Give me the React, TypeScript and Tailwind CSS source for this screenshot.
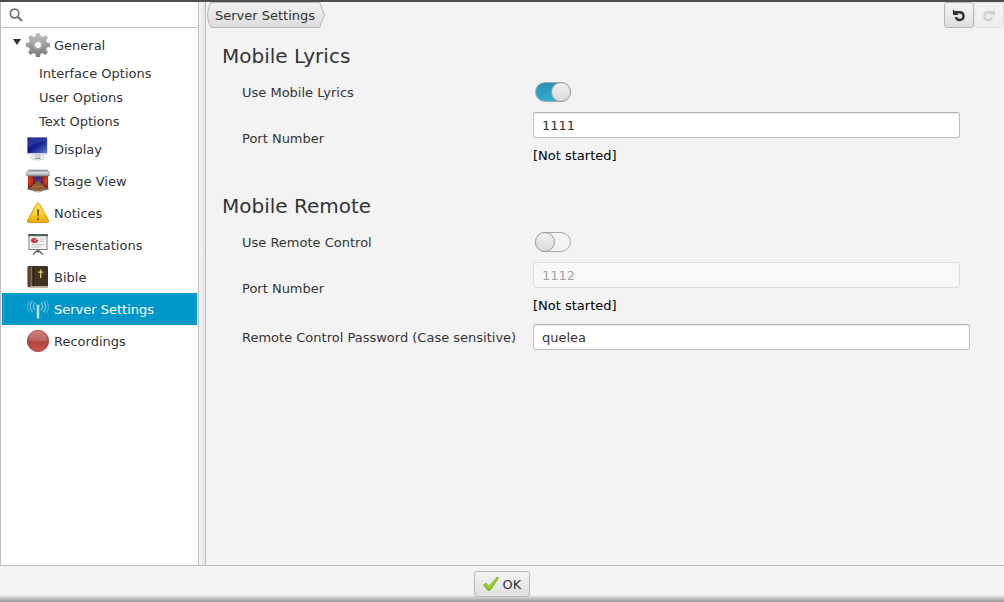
import { useState } from "react";
import type { ReactNode } from "react";
import clsx from "clsx";

const GearIcon = () => (
  <svg viewBox="0 0 24 24" className="size-6">
    <defs>
      <linearGradient id="gear" x1="0" y1="0" x2="0" y2="1">
        <stop offset="0" stopColor="#c2c2c2" />
        <stop offset="1" stopColor="#777777" />
      </linearGradient>
    </defs>
    <g fill="url(#gear)">
      <path
        fillRule="evenodd"
        d="M10 0h4l.6 3.200 2.200.9L19.500 2.200 22 4.800l-2 2.600.9 2.200 3.100.5v3.800l-3.100.6-.9 2.200 1.900 2.600-2.700 2.700-2.600-1.900-2.100.9L14 24h-4l-.5-3.100-2.200-.9-2.600 1.900L2 19.200l1.900-2.600-.9-2.100L0 14v-4l3-.5.9-2.200L2 4.700 4.700 2l2.700 1.900 2.100-.8zM12 9a3 3 0 1 0 0 6 3 3 0 0 0 0-6z"
      />
    </g>
    <circle cx="12" cy="12" r="4.200" fill="none" stroke="#c9c9c9" strokeWidth="1.500" opacity=".4" />
  </svg>
);

const DisplayIcon = () => (
  <svg viewBox="0 0 24 24" className="size-6">
    <defs>
      <linearGradient id="screen" x1="0" y1="0" x2="1" y2="1">
        <stop offset="0" stopColor="#06107c" />
        <stop offset=".5" stopColor="#101c92" />
        <stop offset="1" stopColor="#5f83cf" />
      </linearGradient>
    </defs>
    <ellipse cx="11.500" cy="20.500" rx="7" ry="2.500" fill="#f2f2f2" stroke="#c4c4c4" strokeWidth=".8" />
    <path d="M10 17h3.500l.6 4h-4.700z" fill="#d8d8d8" stroke="#aaa" strokeWidth=".5" />
    <path d="M8.500 21.500h6" stroke="#888" strokeWidth=".8" />
    <rect x="1" y="0" width="20.500" height="17.500" rx=".8" fill="#cfd0d8" />
    <rect x="1.500" y="0.500" width="19.500" height="15.500" fill="url(#screen)" />
    <path d="M1.500 .5h19.500v3.500C14 4.500 7 7 1.500 11z" fill="#fff" opacity=".13" />
  </svg>
);

const StageIcon = () => (
  <svg viewBox="0 0 24 24" className="size-6">
    <defs>
      <linearGradient id="floor" x1="0" y1="0" x2="0" y2="1">
        <stop offset="0" stopColor="#34266f" />
        <stop offset=".55" stopColor="#4a2341" />
        <stop offset="1" stopColor="#b87a22" />
      </linearGradient>
      <linearGradient id="curtain" x1="0" y1="0" x2="0" y2="1">
        <stop offset="0" stopColor="#8f1c12" />
        <stop offset=".5" stopColor="#c9310e" />
        <stop offset="1" stopColor="#7a2415" />
      </linearGradient>
      <linearGradient id="canopy" x1="0" y1="0" x2="0" y2="1">
        <stop offset="0" stopColor="#8f9598" />
        <stop offset=".5" stopColor="#dfe2e3" />
        <stop offset="1" stopColor="#84898c" />
      </linearGradient>
    </defs>
    <path d="M2 5h20v15l-6 1c-1 2.500-7 2.500-8 0l-6-1z" fill="url(#floor)" />
    <path d="M12 11l-8 8h16z" fill="#c98d33" opacity=".5" />
    <path d="M2 6h6c0 6-1 9-3 13H2z" fill="url(#curtain)" />
    <path d="M22 6h-6c0 6 1 9 3 13h3z" fill="url(#curtain)" />
    <path d="M4 8v8M20 8v8" stroke="#e2501f" />
    <path d="M9.500 7v6M12 7v6M14.500 7v6" stroke="#4c46ad" strokeWidth="1" opacity=".7" />
    <path d="M1.500 18.500l6.500 1.300c1.200 1.700 6.800 1.700 8 0l6.500-1.300v2.200l-6 1c-1.500 2.200-7.500 2.200-9 0l-6-1z" fill="#796b62" />
    <path d="M9 22c2 .8 4 .8 6 0" stroke="#e4c878" fill="none" />
    <path d="M2.500 1h19L23.500 4v3H.5V4z" fill="url(#canopy)" stroke="#858a8d" strokeWidth=".6" />
  </svg>
);

const WarningIcon = () => (
  <svg viewBox="0 0 24 24" className="size-6">
    <defs>
      <linearGradient id="warn" x1="0" y1="0" x2="0" y2="1">
        <stop offset="0" stopColor="#ffe45a" />
        <stop offset=".55" stopColor="#fcd224" />
        <stop offset="1" stopColor="#eda400" />
      </linearGradient>
    </defs>
    <path
      d="M12 2.300c.8 0 1.400.4 1.800 1.200l8.600 15.800c.7 1.300.2 2.300-1.200 2.300H2.800c-1.400 0-1.900-1-1.200-2.300l8.600-15.800c.4-.8 1-1.200 1.800-1.200z"
      fill="url(#warn)"
      stroke="#cf9000"
      strokeWidth=".9"
    />
    <path d="M11.100 8.500h1.900l-.4 7h-1.100z" fill="#594313" />
    <circle cx="12" cy="18" r="1.100" fill="#594313" />
  </svg>
);

const PresentationIcon = () => (
  <svg viewBox="0 0 24 24" className="size-6">
    <path d="M12 17l-5 4.500M12 17l5 4.500M12 17v3" stroke="#646964" strokeWidth="1.600" fill="none" />
    <rect x="3" y="2.500" width="18" height="14" fill="#f5f6f4" stroke="#777d77" />
    <rect x="2" y="1" width="20" height="2.200" rx=".8" fill="#536159" />
    <ellipse cx="8.500" cy="7.500" rx="3.600" ry="2.500" fill="#ce3038" />
    <path d="M8.500 7.500l3-1.500" stroke="#fff" strokeWidth=".7" />
    <path d="M14 6h4.500M14 8.300h4M5.500 11.700h13M5.500 14h9" stroke="#b4b8b4" strokeWidth=".9" />
  </svg>
);

const BibleIcon = () => (
  <svg viewBox="0 0 24 24" className="size-6">
    <path d="M3 20h19v2.500H3z" fill="#d6cdb8" />
    <path d="M3 1h17.500c.8 0 1.500.6 1.500 1.400V20c0 .7-.5 1-1.200 1H4.500L3 22.500c-1-.3-1.500-1-1.500-2V2.500C1.500 1.600 2.100 1 3 1z" fill="#403127" />
    <path d="M1.800 2.500h3.700V21H2z" fill="#5c432f" />
    <path d="M5.500 1.500V21" stroke="#99652f" strokeWidth="1.500" />
    <path d="M7.300 1.500V21" stroke="#241b16" />
    <path d="M14.700 4.500v8.500M12 7.200h5.400" stroke="#e8cb5c" strokeWidth="1.300" />
    <path d="M4 22h18" stroke="#7e7057" strokeWidth=".8" />
  </svg>
);

const AntennaIcon = () => (
  <svg viewBox="0 0 24 24" className="size-6" fill="none" stroke="#7fc3dd" strokeLinecap="round">
    <path d="M12 11v9.500" stroke="#c5dfe9" strokeWidth="2.400" />
    <circle cx="12" cy="9" r="1.800" fill="#9ad0e4" stroke="none" />
    <path d="M8.800 5.800c-1.600 2-1.600 5 0 7M15.200 5.800c1.600 2 1.600 5 0 7" strokeWidth="1.200" />
    <path d="M6.200 4.300c-2.600 3-2.600 7.400 0 10.400M17.800 4.300c2.600 3 2.600 7.400 0 10.400" strokeWidth="1.200" />
    <path d="M3.700 3.500c-3 3.800-3 8.500 0 12.300M20.300 3.500c3 3.800 3 8.500 0 12.300" strokeWidth="1" opacity=".7" />
  </svg>
);

const RecordIcon = () => (
  <svg viewBox="0 0 24 24" className="size-6">
    <defs>
      <linearGradient id="rec" x1="0" y1="0" x2="0" y2="1">
        <stop offset="0" stopColor="#c36a67" />
        <stop offset=".5" stopColor="#b0413d" />
        <stop offset="1" stopColor="#c9544c" />
      </linearGradient>
    </defs>
    <circle cx="12" cy="12" r="10.700" fill="url(#rec)" stroke="#9a4743" strokeWidth=".8" />
    <path d="M2.500 11a9.500 9.500 0 0 1 19 0c-5 2.200-14 2.200-19 0z" fill="#fff" opacity=".17" />
  </svg>
);

const SearchIcon = () => (
  <svg viewBox="0 0 14 14" className="size-3.5" fill="none" stroke="#707070">
    <circle cx="5.500" cy="5.500" r="4.300" strokeWidth="1.700" />
    <path d="M8.800 8.800L13 13" strokeWidth="2" />
  </svg>
);

const UndoIcon = () => (
  <svg viewBox="0 0 14 14" className="size-3.5" fill="none" stroke="currentColor">
    <path d="M3 4.200h4.800a3.900 3.900 0 1 1-3.900 5" strokeWidth="2.400" />
    <path d="M1 1.200v5.800h5.800z" fill="currentColor" stroke="none" />
  </svg>
);

const CheckIcon = () => (
  <svg viewBox="0 0 16 16" className="size-4">
    <path d="M.5 9l2.700-1.700 2.800 3L14 1.200l1.500.6L7 14.500H5.200z" fill="#8cc713" stroke="#6aa51a" strokeWidth=".8" strokeLinejoin="round" />
    <path d="M2.300 9.200l1.300-1 2.500 3.300 7.700-9" fill="none" stroke="#bce455" strokeWidth=".9" />
  </svg>
);

const subItems = ["Interface Options", "User Options", "Text Options"];

const items = [
  { label: "Display", icon: <DisplayIcon /> },
  { label: "Stage View", icon: <StageIcon /> },
  { label: "Notices", icon: <WarningIcon /> },
  { label: "Presentations", icon: <PresentationIcon /> },
  { label: "Bible", icon: <BibleIcon /> },
  { label: "Server Settings", icon: <AntennaIcon /> },
  { label: "Recordings", icon: <RecordIcon /> },
];

const Toggle = ({ id, checked, onChange }: { id: string; checked: boolean; onChange: (v: boolean) => void }) => (
  <input
    id={id}
    type="checkbox"
    role="switch"
    checked={checked}
    onChange={(e) => onChange(e.target.checked)}
    className={clsx(
      "ml-0.5 flex h-5 w-9 appearance-none items-center rounded-full border border-[#a8a8a8]",
      "before:-mx-px before:size-5 before:shrink-0 before:rounded-full before:border before:border-[#a0a0a0] before:bg-linear-to-b before:from-[#f0f0f0] before:to-[#dadada]",
      checked ? "justify-end bg-linear-to-b from-[#2592b4] to-[#35add2]" : "bg-[#f3f3f3]",
    )}
  />
);

const fieldClass =
  "block h-[26px] w-full rounded-[3px] border border-[#bfbfbf] border-t-[#b0b0b0] bg-white px-2 leading-[18px] text-[#333] shadow-[inset_0_1px_1px_#eeeeee] outline-none disabled:border-[#dcdcdc] disabled:bg-[#f8f8f8] disabled:text-[#a3a3a3] disabled:shadow-none";

const Row = ({ id, label, children }: { id: string; label: string; children: ReactNode }) => (
  <div className="flex min-h-6 items-center">
    <label htmlFor={id} className="w-[291px] shrink-0">
      {label}
    </label>
    <div className="min-w-0 flex-1">{children}</div>
  </div>
);

const Heading = ({ children }: { children: ReactNode }) => (
  <h2 className="mb-3 text-[20px] leading-6">{children}</h2>
);

const App = () => {
  const [selected, setSelected] = useState("Server Settings");
  const [open, setOpen] = useState(true);
  const [lyrics, setLyrics] = useState(true);
  const [remote, setRemote] = useState(false);
  const [lyricsPort, setLyricsPort] = useState("1111");
  const [remotePort, setRemotePort] = useState("1112");
  const [password, setPassword] = useState("quelea");

  return (
    <div className="flex h-screen flex-col border-t-2 border-[#504d52] bg-[#f3f3f3] font-['DejaVu_Sans',sans-serif] text-[13px] leading-[19px] text-[#333]">
      <div className="flex min-h-0 flex-1 border-b border-[#bcbcbc]">
        <aside className="flex w-[199px] shrink-0 flex-col border-x border-[#bebebe] bg-white">
          <label className="flex h-[26px] items-center rounded-[3px] border-b border-[#bebebe] pt-px pl-2">
            <SearchIcon />
            <input type="text" aria-label="Search" className="min-w-0 flex-1 px-2 outline-none" />
          </label>
          <ul className="px-px pt-px">
            <li>
              <button
                type="button"
                aria-expanded={open}
                onClick={() => setOpen(!open)}
                className="flex h-8 w-full items-center pl-[11px]"
              >
                <svg viewBox="0 0 8 6" className="mr-[5px] mb-1.5 h-1.5 w-2">
                  <path d="M0 0h8L4 6z" fill="#333" />
                </svg>
                <GearIcon />
                <span className="ml-1">General</span>
              </button>
              {open && (
                <ul>
                  {subItems.map((label) => (
                    <li key={label}>
                      <button type="button" className="flex h-6 w-full items-center pl-[37px]">
                        {label}
                      </button>
                    </li>
                  ))}
                </ul>
              )}
            </li>
            {items.map(({ label, icon }) => (
              <li key={label}>
                <button
                  type="button"
                  onClick={() => setSelected(label)}
                  className={clsx(
                    "flex h-8 w-full items-center gap-1",
                    selected === label
                      ? "border border-[#0093c5] bg-[#0096c9] pl-[23px] text-white shadow-[inset_0_0_0_1px_#1fa1ce]"
                      : "pl-6",
                  )}
                >
                  {icon}
                  {label}
                </button>
              </li>
            ))}
          </ul>
        </aside>
        <div className="w-[7px] shrink-0 border-r border-[#bebebe] bg-linear-to-r from-[#f6f6f6] to-[#e4e4e4]" />
        <main className="min-w-0 flex-1">
          <div className="flex h-[26px] items-stretch justify-between pl-px">
            <button type="button" className="relative px-2">
              <svg
                viewBox="0 0 118 26"
                preserveAspectRatio="none"
                className="absolute inset-0 size-full"
              >
                <defs>
                  <linearGradient id="crumb" x1="0" y1="0" x2="0" y2="1">
                    <stop offset="0" stopColor="#f2f2f2" />
                    <stop offset="1" stopColor="#dcdcdc" />
                  </linearGradient>
                </defs>
                <path
                  d="M4 .5H112.500L117.500 13L112.500 25.500H4C1.500 21 .5 17 .5 13S1.500 5 4 .5z"
                  fill="url(#crumb)"
                  stroke="#b9b9b9"
                />
              </svg>
              <span className="relative mr-0.5">Server Settings</span>
            </button>
            <div className="flex">
              <button
                type="button"
                aria-label="Undo"
                className="flex w-[30px] items-center justify-center rounded-[3px] border border-[#b8b8b8] bg-linear-to-b from-[#f4f4f4] to-[#dfdfdf]"
              >
                <UndoIcon />
              </button>
              <button
                type="button"
                aria-label="Redo"
                disabled
                className="flex w-[30px] items-center justify-center rounded-[3px] border border-[#e2e2e2] bg-linear-to-b from-[#f4f4f4] to-[#ededed] text-[#d2d2d2]"
              >
                <span className="-scale-x-100">
                  <UndoIcon />
                </span>
              </button>
            </div>
          </div>

          <div className="pt-4 pr-[34px] pl-4">
            <section>
              <Heading>Mobile Lyrics</Heading>
              <div className="flex flex-col gap-2 pr-[10px] pl-5">
                <Row id="use-lyrics" label="Use Mobile Lyrics">
                  <Toggle id="use-lyrics" checked={lyrics} onChange={setLyrics} />
                </Row>
                <Row id="lyrics-port" label="Port Number">
                  <input
                    id="lyrics-port"
                    type="text"
                    className={fieldClass}
                    disabled={!lyrics}
                    value={lyricsPort}
                    onChange={(e) => setLyricsPort(e.target.value)}
                  />
                  <p className="mt-2 text-black">[Not started]</p>
                </Row>
              </div>
            </section>

            <section className="mt-[29px]">
              <Heading>Mobile Remote</Heading>
              <div className="flex flex-col gap-2 pr-[10px] pl-5">
                <Row id="use-remote" label="Use Remote Control">
                  <Toggle id="use-remote" checked={remote} onChange={setRemote} />
                </Row>
                <Row id="remote-port" label="Port Number">
                  <input
                    id="remote-port"
                    type="text"
                    className={fieldClass}
                    disabled={!remote}
                    value={remotePort}
                    onChange={(e) => setRemotePort(e.target.value)}
                  />
                  <p className="mt-2 text-black">[Not started]</p>
                </Row>
              </div>
              <div className="mt-[9px] pl-5">
                <Row id="password" label="Remote Control Password (Case sensitive)">
                  <input
                    id="password"
                    type="text"
                    className={fieldClass}
                    value={password}
                    onChange={(e) => setPassword(e.target.value)}
                  />
                </Row>
              </div>
            </section>
          </div>
        </main>
      </div>

      <footer className="flex justify-center bg-linear-to-b from-[#f3f3f3] from-80% to-[#949494] py-[5px]">
        <button
          type="button"
          className="flex h-[26px] items-center gap-1 rounded-[3px] border border-[#b8b8b8] bg-linear-to-b from-[#f4f4f4] to-[#dfdfdf] px-2"
        >
          <CheckIcon />
          OK
        </button>
      </footer>
    </div>
  );
};

export default App;
